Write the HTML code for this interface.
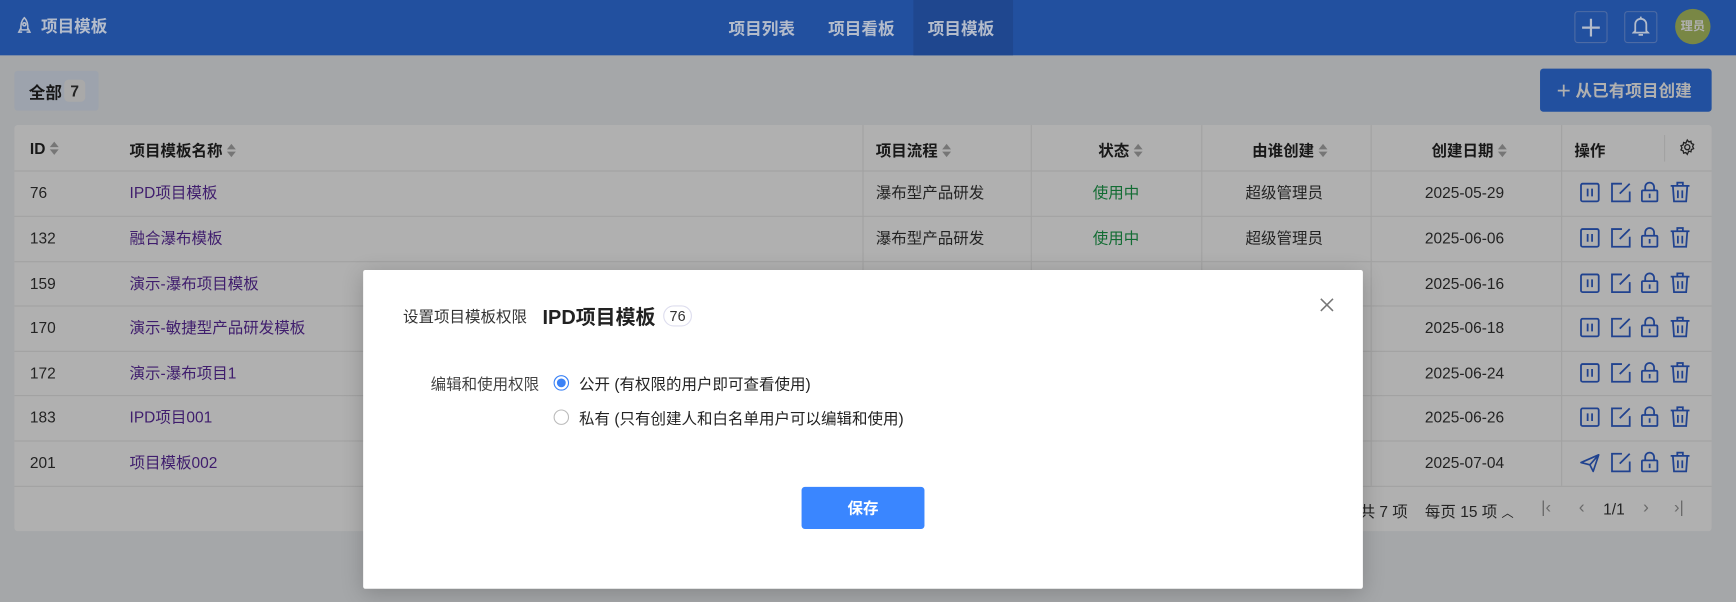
<!DOCTYPE html>
<html><head><meta charset="utf-8"><style>
*{margin:0;padding:0;box-sizing:border-box}
html,body{width:1736px;height:602px;overflow:hidden;background:#a5a7a9}
body{font-family:"Liberation Sans","Noto Sans CJK SC",sans-serif;color:#232323}
#w{position:absolute;left:0;top:0;width:1568px;height:544px;transform:scale(1.10714,1.1066);transform-origin:0 0;background:#a5a7a9}
.a{position:absolute;white-space:nowrap}
.hdr{left:0;top:0;width:1568px;height:50px;background:#22509f}
.nav{color:#b4bccb;font-size:15px;font-weight:bold;top:15px}
.tb{left:13px;top:113px;width:1533px;height:367px;background:#b0b0b0;border-radius:3px}
.th{font-size:14px;font-weight:bold;color:#181818;top:126px}
.td{font-size:14px;color:#232323}
.nm{color:#3f1d6d}
.hl{position:absolute;left:13px;width:1533px;height:1px;background:#a2a2a2}
.vl{position:absolute;width:1px;background:#a2a2a2}
.sort{display:inline-block;vertical-align:middle;margin-left:4px;width:8px;height:12px;position:relative;top:-1px}
.sort:before{content:"";position:absolute;left:0;top:0;border:4px solid transparent;border-bottom:5px solid #767676;border-top:0}
.sort:after{content:"";position:absolute;left:0;top:7px;border:4px solid transparent;border-top:5px solid #767676;border-bottom:0}
.ic{position:absolute}
</style></head><body><div id="w">
<div class="a hdr"></div>
<div class="a" style="left:825px;top:0;width:90px;height:50px;background:#1f478f"></div>
<svg class="ic" style="left:15px;top:15px" width="14" height="17" viewBox="0 0 14 17" fill="none" stroke="#b4bccb" stroke-width="1.4"><path d="M7 1C4 4 3.5 8 4 12h6c.5-4 0-8-3-11z"/><circle cx="7" cy="7" r="1.4"/><path d="M4 10l-2 4h3M10 10l2 4h-3"/></svg>
<div class="a" style="left:37px;top:13px;color:#b4bccb;font-size:15px;font-weight:bold">项目模板</div>
<div class="a nav" style="left:658px">项目列表</div>
<div class="a nav" style="left:748px">项目看板</div>
<div class="a nav" style="left:838px">项目模板</div>
<div class="a" style="left:1422px;top:10px;width:30px;height:29px;border:1px solid #4d6ba5;border-radius:3px"></div>
<svg class="ic" style="left:1428px;top:16px" width="18" height="18" viewBox="0 0 18 18" stroke="#b4bccb" stroke-width="2"><path d="M9 1v16M1 9h16"/></svg>
<div class="a" style="left:1467px;top:10px;width:30px;height:29px;border:1px solid #4d6ba5;border-radius:3px"></div>
<svg class="ic" style="left:1474px;top:14px" width="16" height="20" viewBox="0 0 16 20" fill="none" stroke="#b4bccb" stroke-width="1.6"><path d="M3 14V8a5 5 0 0110 0v6l1.5 1.5h-13z"/><path d="M6 17.5h4M8 1v2"/></svg>
<div class="a" style="left:1513px;top:8px;width:32px;height:32px;border-radius:50%;background:#798745;color:#b0b0b0;font-size:11px;font-weight:bold;text-align:center;line-height:32px">理员</div>

<div class="a" style="left:13px;top:64px;width:76px;height:36px;background:#9da3ad;border-radius:3px"></div>
<div class="a" style="left:26px;top:73px;font-size:15px;font-weight:bold;color:#181818">全部</div>
<div class="a" style="left:58px;top:72px;width:19px;height:20px;background:#a9a9a9;border-radius:4px;font-size:14px;font-weight:bold;text-align:center;line-height:20px">7</div>
<div class="a" style="left:1391px;top:62px;width:155px;height:39px;background:#22509f;border-radius:3px;color:#b0b0b0;font-size:15px;font-weight:bold;line-height:39px;padding-left:15px"><span style="font-size:22px;font-weight:normal;vertical-align:-2px">+</span>&nbsp;从已有项目创建</div>

<div class="a tb"></div>
<div class="hl" style="top:154px"></div><div class="hl" style="top:195px"></div><div class="hl" style="top:236px"></div><div class="hl" style="top:276px"></div><div class="hl" style="top:317px"></div><div class="hl" style="top:357px"></div><div class="hl" style="top:398px"></div><div class="hl" style="top:439px"></div>
<div class="vl" style="left:779px;top:113px;height:326px"></div><div class="vl" style="left:931px;top:113px;height:326px"></div><div class="vl" style="left:1085px;top:113px;height:326px"></div><div class="vl" style="left:1238px;top:113px;height:326px"></div><div class="vl" style="left:1410px;top:113px;height:326px"></div>
<div class="vl" style="left:1503px;top:122px;height:24px"></div>
<div class="a th" style="left:27px">ID<i class="sort"></i></div>
<div class="a th" style="left:117px">项目模板名称<i class="sort"></i></div>
<div class="a th" style="left:791px">项目流程<i class="sort"></i></div>
<div class="a th" style="left:992px">状态<i class="sort"></i></div>
<div class="a th" style="left:1131px">由谁创建<i class="sort"></i></div>
<div class="a th" style="left:1293px">创建日期<i class="sort"></i></div>
<div class="a th" style="left:1422px">操作</div>
<svg class="ic" style="left:1516px;top:125px" width="16" height="16" viewBox="0 0 16 16" fill="none" stroke="#232323" stroke-width="1.2"><circle cx="8" cy="8" r="2.3"/><path d="M8 1.5l1.3 1.7 2-.6.4 2.1 2 .8-.9 1.9.9 1.9-2 .8-.4 2.1-2-.6L8 14.5l-1.3-1.7-2 .6-.4-2.1-2-.8.9-1.9-.9-1.9 2-.8.4-2.1 2 .6z"/></svg>

<div id="rows"></div>
<script>
var R=[["76","IPD项目模板",1,"2025-05-29"],["132","融合瀑布模板",1,"2025-06-06"],["159","演示-瀑布项目模板",0,"2025-06-16"],["170","演示-敏捷型产品研发模板",0,"2025-06-18"],["172","演示-瀑布项目1",0,"2025-06-24"],["183","IPD项目001",0,"2025-06-26"],["201","项目模板002",0,"2025-07-04"]];
var tops=[164,205,246,286,327,367,408],h="";
var ic='#20428f';
R.forEach(function(r,i){var t=tops[i];var t2=t+2;
h+='<div class="a td" style="left:27px;top:'+t2+'px">'+r[0]+'</div><div class="a td nm" style="left:117px;top:'+t+'px">'+r[1]+'</div>';
if(r[2])h+='<div class="a td" style="left:791px;top:'+t+'px">瀑布型产品研发</div><div class="a td" style="left:987px;top:'+t+'px;color:#126c33">使用中</div><div class="a td" style="left:1125px;top:'+t+'px">超级管理员</div>';
h+='<div class="a td" style="left:1287px;top:'+t2+'px">'+r[3]+'</div>';
var y=t;
if(i==6)h+='<svg class="ic" style="left:1426px;top:'+y+'px" width="20" height="20" viewBox="0 0 20 20" fill="none" stroke="'+ic+'" stroke-width="1.5" stroke-linejoin="round"><path d="M2 10L18 3l-5 15-3-6z M10 12l8-9"/></svg>';
else h+='<svg class="ic" style="left:1426px;top:'+y+'px" width="20" height="20" viewBox="0 0 20 20" fill="none" stroke="'+ic+'" stroke-width="1.6"><rect x="2" y="2" width="16" height="16" rx="1.5"/><path d="M8 6.5v7M12 6.5v7"/></svg>';
h+='<svg class="ic" style="left:1454px;top:'+y+'px" width="20" height="20" viewBox="0 0 20 20" fill="none" stroke="'+ic+'" stroke-width="1.6"><path d="M11 2H2v16h16V9"/><path d="M18 2l-9 9"/></svg>';
h+='<svg class="ic" style="left:1481px;top:'+(y-1)+'px" width="18" height="21" viewBox="0 0 18 21" fill="none" stroke="'+ic+'" stroke-width="1.6"><rect x="2" y="9" width="14" height="10" rx="1"/><path d="M5 9V6a4 4 0 018 0v3M9 12v4"/></svg>';
h+='<svg class="ic" style="left:1508px;top:'+(y-1)+'px" width="19" height="21" viewBox="0 0 19 21" fill="none" stroke="'+ic+'" stroke-width="1.6"><path d="M1 5h17M7 5V2h5v3M3 5l1 14h11l1-14M7.5 9v7M11.5 9v7"/></svg>';
});
document.getElementById('rows').innerHTML=h;
</script>
<div class="a td" style="left:1228px;top:452px">共 7 项</div>
<div class="a td" style="left:1287px;top:452px">每页 15 项 <span style="font-size:11px">︿</span></div>
<div class="a td" style="left:1392px;top:450px;color:#6a6a6a;font-size:15px">|&lsaquo;</div>
<div class="a td" style="left:1426px;top:450px;color:#6a6a6a;font-size:16px">&lsaquo;</div>
<div class="a td" style="left:1448px;top:452px">1/1</div>
<div class="a td" style="left:1484px;top:450px;color:#6a6a6a;font-size:16px">&rsaquo;</div>
<div class="a td" style="left:1512px;top:450px;color:#6a6a6a;font-size:15px">&rsaquo;|</div>

<div class="a" style="left:328px;top:244px;width:903px;height:288px;background:#fff;border-radius:2px;box-shadow:0 4px 20px rgba(0,0,0,.2)"></div>
<div class="a" style="left:364px;top:276px;font-size:14px;color:#333">设置项目模板权限</div>
<div class="a" style="left:490px;top:273px;font-size:18px;font-weight:bold;color:#222">IPD项目模板</div>
<div class="a" style="left:599px;top:276px;width:26px;height:19px;border:1px solid #dde;border-radius:10px;font-size:13px;text-align:center;line-height:17px;color:#333">76</div>
<svg class="ic" style="left:1192px;top:269px" width="13" height="13" viewBox="0 0 13 13" stroke="#777" stroke-width="1.4"><path d="M1 1l11 11M12 1L1 12"/></svg>
<div class="a" style="left:389px;top:337px;font-size:14px;color:#444">编辑和使用权限</div>
<div class="a" style="left:500px;top:339px;width:14px;height:14px;border-radius:50%;border:1px solid #3b82f6;background:#fff"><div style="position:absolute;left:2px;top:2px;width:8px;height:8px;border-radius:50%;background:#3b82f6"></div></div>
<div class="a" style="left:523px;top:337px;font-size:14px;color:#222">公开 (有权限的用户即可查看使用)</div>
<div class="a" style="left:500px;top:370px;width:14px;height:14px;border-radius:50%;border:1px solid #bbb;background:#fff"></div>
<div class="a" style="left:523px;top:368px;font-size:14px;color:#222">私有 (只有创建人和白名单用户可以编辑和使用)</div>
<div class="a" style="left:724px;top:440px;width:111px;height:38px;background:#3a86ff;border-radius:3px;color:#fff;font-size:14px;font-weight:bold;text-align:center;line-height:38px">保存</div>
</div></body></html>
